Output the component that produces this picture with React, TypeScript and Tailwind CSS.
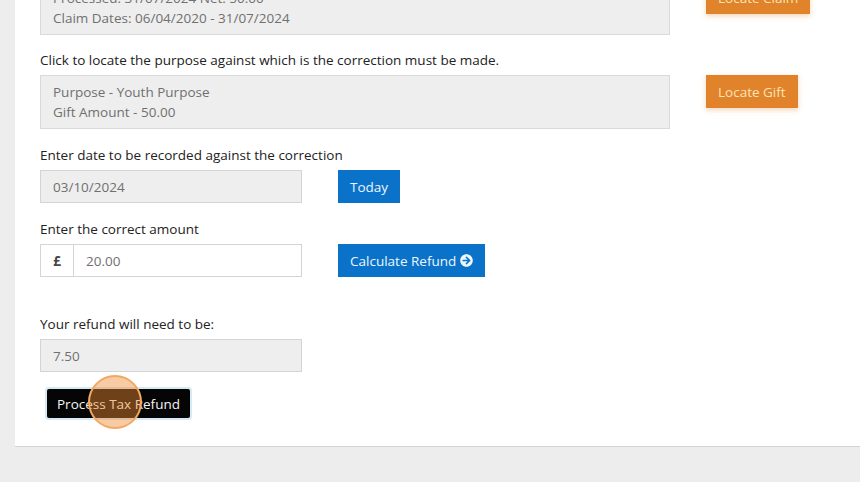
import React from "react";
import { FaArrowCircleRight } from "react-icons/fa";

const font = { fontFamily: "'Open Sans', 'Liberation Sans', sans-serif" };

export default function App() {
  return (
    <div className="relative w-[860px] h-[482px] overflow-hidden bg-[#eeedee]" style={font}>
      <div className="ml-[15px] -mt-[40px] bg-white border-b border-[#d4d4d4] pt-[21px] pb-[28px] pl-[25px] text-[13.5px] leading-[20px] text-[#222]">
        {/* Claim row */}
        <div className="flex items-start">
          <div className="w-[630px] bg-[#eeeeee] border border-[#d9d9d9] px-[12px] py-[6px] text-[#707070]">
            <div>Processed: 31/07/2024 Net: 50.00</div>
            <div>Claim Dates: 06/04/2020 - 31/07/2024</div>
          </div>
          <button className="ml-[36px] h-[33px] px-[12px] bg-[#e0832b] text-[#fde3b4] shadow-[0_2px_5px_rgba(224,131,43,0.35)]">
            Locate Claim
          </button>
        </div>

        <div className="mt-[15px] mb-[5px]">Click to locate the purpose against which is the correction must be made.</div>
        <div className="flex items-start">
          <div className="w-[630px] bg-[#eeeeee] border border-[#d9d9d9] px-[12px] py-[6px] text-[#707070]">
            <div>Purpose - Youth Purpose</div>
            <div>Gift Amount - 50.00</div>
          </div>
          <button className="ml-[36px] h-[33px] px-[12px] bg-[#e0832b] text-[#fde3b4] shadow-[0_2px_5px_rgba(224,131,43,0.35)]">
            Locate Gift
          </button>
        </div>

        <div className="mt-[16px] mb-[5px]">Enter date to be recorded against the correction</div>
        <div className="flex items-start">
          <div className="w-[262px] h-[33px] flex items-center bg-[#eeeeee] border border-[#d4d4d4] px-[12px] text-[#707070]">
            03/10/2024
          </div>
          <button className="ml-[36px] h-[33px] px-[12px] bg-[#0a72c9] text-[#eef6ff]">Today</button>
        </div>

        <div className="mt-[16px] mb-[5px]">Enter the correct amount</div>
        <div className="flex items-start">
          <div className="w-[262px] h-[33px] flex border border-[#d4d4d4]">
            <div className="w-[33px] flex items-center justify-center border-r border-[#d4d4d4] font-bold text-[#444]">£</div>
            <div className="flex-1 flex items-center px-[12px] text-[#707070]">20.00</div>
          </div>
          <button className="ml-[36px] h-[33px] px-[12px] bg-[#0a72c9] text-[#eef6ff] flex items-center gap-[4px]">
            Calculate Refund <FaArrowCircleRight className="w-[13px] h-[13px]" />
          </button>
        </div>

        <div className="mt-[37px] mb-[5px]">Your refund will need to be:</div>
        <div className="w-[262px] h-[33px] flex items-center bg-[#eeeeee] border border-[#d4d4d4] px-[12px] text-[#707070]">
          7.50
        </div>

        <div className="mt-[17px] ml-[7px]">
          <button className="h-[29px] px-[10px] bg-[#050505] text-[#f4f4f4] rounded-[2px] ring-2 ring-[#d6eaf6]">
            Process Tax Refund
          </button>
        </div>
      </div>

      <div className="absolute left-[88px] top-[375px] w-[54px] h-[54px] rounded-full border-2 border-[#f0a862] bg-[rgba(240,140,50,0.45)]"></div>
    </div>
  );
}
